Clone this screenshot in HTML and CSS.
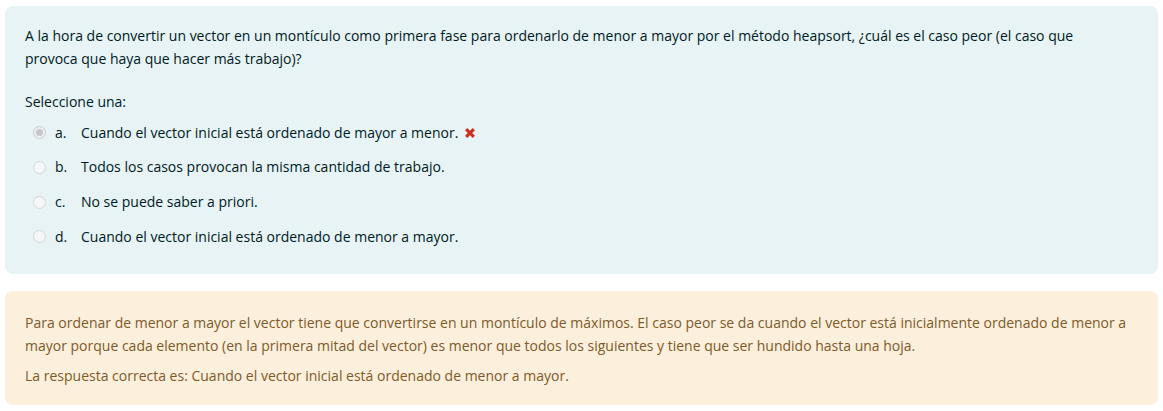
FILE: index.html
```html
<!DOCTYPE html>
<html lang="es">
<head>
<meta charset="utf-8">
<link rel="stylesheet" href="styles.css">
</head>
<body>
<div class="formulation">
  <p class="qtext">A la hora de convertir un vector en un montículo como primera fase para ordenarlo de menor a mayor por el método heapsort, ¿cuál es el caso peor (el caso que provoca que haya que hacer más trabajo)?</p>
  <p class="prompt">Seleccione una:</p>
  <div class="answers">
    <div class="opt"><span class="radio checked"></span><span class="letter">a.</span><span class="label">Cuando el vector inicial está ordenado de mayor a menor.</span><svg class="cross" width="12" height="12" viewBox="0 0 12 12"><path d="M1 3.2 L3.2 1 L6 3.8 L8.8 1 L11 3.2 L8.2 6 L11 8.8 L8.8 11 L6 8.2 L3.2 11 L1 8.8 L3.8 6 Z" fill="#ca3120"/></svg></div>
    <div class="opt"><span class="radio"></span><span class="letter">b.</span><span class="label">Todos los casos provocan la misma cantidad de trabajo.</span></div>
    <div class="opt"><span class="radio"></span><span class="letter">c.</span><span class="label">No se puede saber a priori.</span></div>
    <div class="opt"><span class="radio"></span><span class="letter">d.</span><span class="label">Cuando el vector inicial está ordenado de menor a mayor.</span></div>
  </div>
</div>
<div class="outcome">
  <p class="fb">Para ordenar de menor a mayor el vector tiene que convertirse en un montículo de máximos. El caso peor se da cuando el vector está inicialmente ordenado de menor a mayor porque cada elemento (en la primera mitad del vector) es menor que todos los siguientes y tiene que ser hundido hasta una hoja.</p>
  <p class="right">La respuesta correcta es: Cuando el vector inicial está ordenado de menor a mayor.</p>
</div>
</body>
</html>
```
FILE: styles.css
```css
html, body {
  margin: 0;
  padding: 0;
  background: #ffffff;
}
body {
  padding: 6px 5px 0 5px;
  font-family: "Open Sans", "Noto Sans", sans-serif;
  font-size: 14px;
  line-height: 22.5px;
}
p { margin: 0; }
.formulation {
  background: #e7f3f5;
  color: #001a1e;
  border-radius: 8px;
  padding: 19px 20px 20px 20px;
  height: 268px;
  box-sizing: border-box;
}
.qtext {
  margin-bottom: 20.5px;
  margin-right: 15px;
}
.prompt { margin-bottom: 2.5px; }
.answers {
  display: flex;
  flex-direction: column;
  padding-left: 8px;
}
.opt {
  display: flex;
  align-items: center;
  height: 34.7px;
}
.radio {
  width: 13px;
  height: 13px;
  border-radius: 50%;
  border: 1px solid #d3d7da;
  background: #f4f6f7;
  box-sizing: border-box;
  display: inline-flex;
  align-items: center;
  justify-content: center;
  margin-right: 9px;
}
.radio.checked {
  border-color: #c9cdd0;
  background: #eceef0;
}
.radio.checked::after {
  content: "";
  width: 7px;
  height: 7px;
  border-radius: 50%;
  background: #c4c8cb;
}
.letter { width: 26px; }
.cross { margin-left: 6px; }
.outcome {
  margin-top: 17px;
  background: #fcefdc;
  color: #7d5a29;
  border-radius: 8px;
  padding: 21px 20px 19px 20px;
  height: 114px;
  box-sizing: border-box;
}
.fb { margin-bottom: 7.5px; }
```
